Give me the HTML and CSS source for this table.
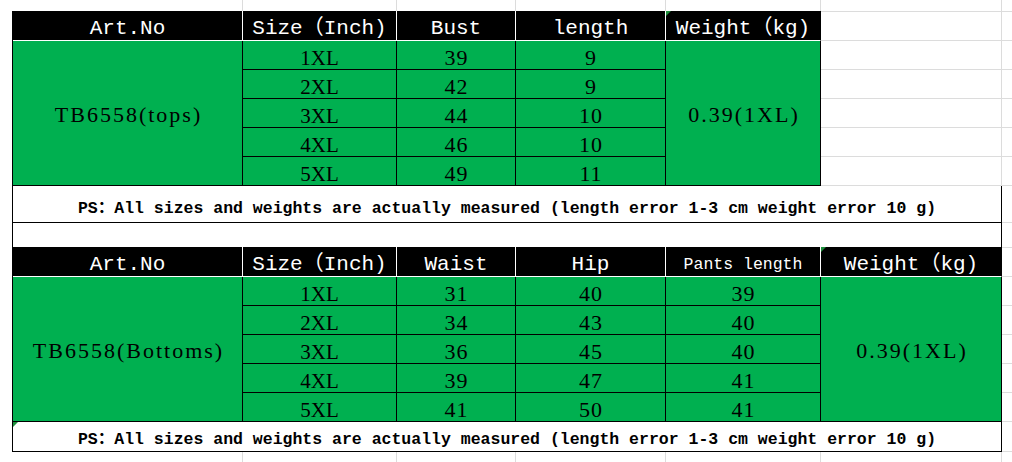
FILE: index.html
```html
<!DOCTYPE html>
<html lang="en">
<head>
<meta charset="utf-8">
<title>Size chart</title>
<link rel="stylesheet" href="styles.css">
</head>
<body>
<div class="sheet">
  <div class="tbl tops">
    <div class="c h">Art.No</div>
    <div class="c h">Size（Inch)</div>
    <div class="c h">Bust</div>
    <div class="c h">length</div>
    <div class="c h last flag">Weight（kg)</div>

    <div class="c m art">TB6558(tops)</div>
    <div class="c sz">1XL</div><div class="c">39</div><div class="c">9</div>
    <div class="c m wt">0.39(1XL)</div>
    <div class="c sz">2XL</div><div class="c">42</div><div class="c">9</div>
    <div class="c sz">3XL</div><div class="c">44</div><div class="c">10</div>
    <div class="c sz">4XL</div><div class="c">46</div><div class="c">10</div>
    <div class="c sz">5XL</div><div class="c">49</div><div class="c">11</div>
  </div>
  <div class="ps ps1">PS：All sizes and weights are actually measured (length error 1-3 cm weight error 10 g)</div>
  <div class="blank"></div>
  <div class="tbl bottoms">
    <div class="c h">Art.No</div>
    <div class="c h">Size（Inch)</div>
    <div class="c h">Waist</div>
    <div class="c h">Hip</div>
    <div class="c h small">Pants length</div>
    <div class="c h last flag">Weight（kg)</div>

    <div class="c m art">TB6558(Bottoms)</div>
    <div class="c sz">1XL</div><div class="c">31</div><div class="c">40</div><div class="c">39</div>
    <div class="c m wt">0.39(1XL)</div>
    <div class="c sz">2XL</div><div class="c">34</div><div class="c">43</div><div class="c">40</div>
    <div class="c sz">3XL</div><div class="c">36</div><div class="c">45</div><div class="c">40</div>
    <div class="c sz">4XL</div><div class="c">39</div><div class="c">47</div><div class="c">41</div>
    <div class="c sz">5XL</div><div class="c">41</div><div class="c">50</div><div class="c">41</div>
  </div>
  <div class="ps ps2 flag">PS：All sizes and weights are actually measured (length error 1-3 cm weight error 10 g)</div>
</div>
</body>
</html>
```

FILE: styles.css
```css
html {
  height: 100%;
  background-color: #ffffff;
  background-image:
    linear-gradient(#dcdcdc, #dcdcdc),
    linear-gradient(#dcdcdc, #dcdcdc),
    linear-gradient(#dcdcdc, #dcdcdc),
    linear-gradient(#dcdcdc, #dcdcdc),
    linear-gradient(#dcdcdc, #dcdcdc),
    linear-gradient(#dcdcdc, #dcdcdc),
    linear-gradient(#dcdcdc, #dcdcdc),
    linear-gradient(#dcdcdc, #dcdcdc),
    linear-gradient(#dcdcdc, #dcdcdc),
    linear-gradient(#dcdcdc, #dcdcdc),
    linear-gradient(#dcdcdc, #dcdcdc),
    linear-gradient(#dcdcdc, #dcdcdc),
    linear-gradient(#dcdcdc, #dcdcdc),
    linear-gradient(#dcdcdc, #dcdcdc),
    linear-gradient(#dcdcdc, #dcdcdc),
    linear-gradient(#dcdcdc, #dcdcdc),
    linear-gradient(#dcdcdc, #dcdcdc),
    linear-gradient(#dcdcdc, #dcdcdc),
    linear-gradient(#dcdcdc, #dcdcdc),
    linear-gradient(#dcdcdc, #dcdcdc),
    linear-gradient(#dcdcdc, #dcdcdc),
    linear-gradient(#dcdcdc, #dcdcdc);
  background-repeat: no-repeat;
  background-position:
    242px 0, 396px 0, 515px 0, 665px 0, 820px 0, 1001px 0,
    820px 11px, 820px 40px, 820px 69px, 820px 98px, 820px 127px, 820px 156px,
    820px 185px, 820px 222px, 820px 247px, 820px 276px, 820px 305px, 820px 334px,
    820px 363px, 820px 392px, 820px 421px, 820px 451px;
  background-size:
    1px 100%, 1px 100%, 1px 100%, 1px 100%, 1px 100%, 1px 100%,
    192px 1px, 192px 1px, 192px 1px, 192px 1px, 192px 1px, 192px 1px,
    192px 1px, 192px 1px, 192px 1px, 192px 1px, 192px 1px, 192px 1px,
    192px 1px, 192px 1px, 192px 1px, 192px 1px;
}

body {
  margin: 0;
  padding: 11px 0 0 12px;
  font-family: "Liberation Mono", "Noto Sans CJK SC", monospace;
  color: #000;
}

.sheet {
  width: 990px;
  box-sizing: border-box;
  border-left: 1px solid #000;
}

.tbl {
  display: grid;
  grid-template-rows: 30px repeat(5, 29px);
}

.tops {
  grid-template-columns: 230px 154px 119px 150px 155px;
  width: 808px;
}

.bottoms {
  grid-template-columns: 230px 154px 119px 150px 155px 181px;
  width: 989px;
}

.c {
  box-sizing: border-box;
  border-right: 1px solid #000;
  border-bottom: 1px solid #000;
  background: #00b050;
  text-align: center;
  font-family: "Liberation Serif", "Noto Sans CJK SC", serif;
  font-size: 22px;
  letter-spacing: 1px;
  line-height: 28px;
  padding-top: 3px;
  padding-left: 1px;
  white-space: nowrap;
  overflow: hidden;
}

.sz {
  font-size: 21px;
  letter-spacing: 0;
  padding-left: 0;
}

.h {
  background: #000;
  color: #fff;
  border-right-color: #fff;
  border-bottom-color: #fff;
  font-family: "Liberation Mono", "Noto Sans CJK SC", monospace;
  font-size: 21px;
  letter-spacing: 0;
  padding-top: 4px;
  padding-left: 0;
}

.h.last {
  border-right-color: #000;
}

.h.small {
  font-size: 16.5px;
}

.m {
  grid-row: 2 / span 5;
  display: flex;
  align-items: center;
  justify-content: center;
  padding-top: 4px;
  padding-left: 2px;
  letter-spacing: 2px;
}

.tops .art, .bottoms .art { grid-column: 1; }
.tops .wt { grid-column: 5; }
.bottoms .wt { grid-column: 6; }

.ps {
  box-sizing: border-box;
  width: 989px;
  border-right: 1px solid #000;
  border-bottom: 1px solid #000;
  background: #fff;
  display: flex;
  align-items: center;
  justify-content: center;
  font-size: 16.5px;
  font-weight: bold;
  white-space: pre;
}

.ps1 {
  height: 37px;
  padding-top: 4px;
}

.ps2 {
  height: 30px;
}

.blank {
  box-sizing: border-box;
  width: 989px;
  height: 24px;
  border-right: 1px solid #000;
  background: #fff;
}

.flag {
  position: relative;
}

.flag::before {
  content: "";
  position: absolute;
  left: 0;
  top: 0;
  width: 0;
  height: 0;
  border-top: 5px solid #1e8f3c;
  border-right: 5px solid transparent;
}
```
